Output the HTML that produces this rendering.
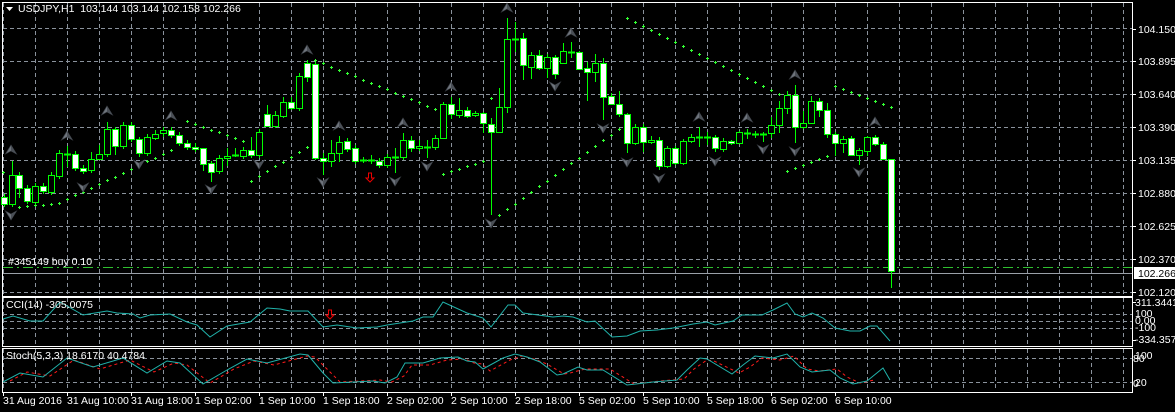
<!DOCTYPE html>
<html><head><meta charset="utf-8"><style>
html,body{margin:0;padding:0;background:#000;width:1175px;height:412px;overflow:hidden}
svg{display:block}
text{font-family:"Liberation Sans",sans-serif;font-size:10.5px;fill:#fff}
</style></head><body>
<svg id="s" width="1175" height="412" xmlns="http://www.w3.org/2000/svg"></svg>
<script>
const S=document.getElementById('s');let h='';
const G='#8a929c';
function L(x1,y1,x2,y2,c,dash,w){h+=`<line x1="${x1}" y1="${y1}" x2="${x2}" y2="${y2}" stroke="${c}" stroke-width="${w||1}" ${dash?`stroke-dasharray="${dash}"`:''} shape-rendering="crispEdges"/>`;}
function T(x,y,t,a){h+=`<text x="${x}" y="${y}" ${a||''}>${t}</text>`;}
const panels=[[3,295],[298,345],[349,391]];
for(let x=3;x<1130;x+=32){
 const day=((x-179)%192===0)&&x>=179;
 panels.forEach(p=>L(x+.5,p[0],x+.5,p[1],day?'#fff':G,'4,3'));
}
[28,61,94,127,160,193,226,259,292].forEach(y=>L(3,y+.5,1132,y+.5,G,'4,3'));
[314,321,328].forEach(y=>L(3,y+.5,1132,y+.5,G,'4,3'));
[358,382].forEach(y=>L(3,y+.5,1132,y+.5,G,'4,3'));
function R(x,y,w,hh){h+=`<rect x="${x+.5}" y="${y+.5}" width="${w}" height="${hh}" fill="none" stroke="#fff" shape-rendering="crispEdges"/>`;}
R(2,2,1130,294);R(2,297,1130,49);R(2,348,1130,44);
L(3,267.5,1132,267.5,'#2fbf2f','10,4,2,4');
L(3,273.5,1132,273.5,'#9aa0a8');
T(8,265,'#345149 buy 0.10');
const sar=[[3,172,3,172],[19,207,59,203],[59,203,171,150],[187,121,243,141],[251,181,307,147],[315,60,435,109],[443,174,483,161],[491,98,491,98],[499,215,619,129],[627,18,779,94],[787,171,827,156],[835,86,891,107]];
sar.forEach(s=>{const n=Math.round((s[2]-s[0])/8);for(let i=0;i<=n;i++){const x=s[0]+i*8,y=Math.round(n?s[1]+(s[3]-s[1])*i/n:s[1]);h+=`<path d="M${x-1} ${y+.5}h3M${x+.5} ${y-1}v3" stroke="#33ff33" stroke-width="1" shape-rendering="crispEdges"/>`;}});
const C=[[4,197,204,1],[12,175,204,0,161,207],[19,175,188,1,172,198],[27,188,201,1],[35,186,202,0],[43,186,191,1],[51,175,192,0],[59,153,176,0,150],[67,154,154,0,146,167],[75,154,168,1],[83,168,171,1],[91,159,170,0,152,173],[99,154,159,0,145,160],[107,129,154,0,122,157],[115,129,146,1,127,155],[123,125,146,0],[131,125,139,1],[139,139,153,1,137,157],[147,137,153,0],[155,134,138,0,130,140],[163,130,133,0,127,137],[171,130,135,1],[179,135,143,1],[187,143,147,1],[195,147,149,1,143,152],[203,148,164,1,148,171],[211,163,172,1,161,182],[219,158,171,0],[227,156,158,0,148,166],[235,155,155,0,148,157],[243,150,156,0],[251,150,155,1,137,158],[259,132,155,0],[267,114,126,1,105,127],[275,115,126,0,111,128],[283,102,116,0,97,118],[291,102,108,1,97,110],[299,76,108,0],[307,63,77,1,60,82],[315,64,158,1,62,160],[323,158,161,1,153,175],[331,153,161,0,140,167],[339,142,153,0,136,162],[347,141,149,1],[355,148,161,1],[363,160,160,0,157,163],[371,160,160,0,155,164],[379,161,165,1],[387,157,165,0],[395,157,157,0,148,173],[403,140,157,0,133,160],[411,140,148,1,136,152],[419,146,148,0,140,151],[427,147,147,0,140,158],[435,138,147,0],[443,104,138,0,102,139],[451,104,114,1,97,119],[459,110,115,0,98,118],[467,110,116,1,107,118],[475,113,115,0,111,117],[483,113,123,1,112,133],[491,124,132,1,118,215],[499,107,132,0,88,133],[507,39,107,0,18,113],[515,39,39,0,22,52],[523,38,65,1,33,80],[531,55,67,0,52,79],[539,55,68,1,50,70],[547,57,68,0,54,78],[555,57,74,1,55,79],[563,51,63,0,43,64],[571,52,52,0,42,58],[579,52,69,1,51,70],[587,68,72,1,62,101],[595,63,72,0,54,82],[603,63,97,1,58,120],[611,96,104,1,93,105],[619,104,114,1,91,117],[627,114,143,1,113,153],[635,127,143,0,124,145],[643,127,142,1,124,152],[651,140,142,0,136,144],[659,140,166,1,137,170],[667,148,166,0,146,168],[675,148,163,1,146,165],[683,141,163,0,139,165],[691,137,141,0,134,143],[699,137,137,0,127,147],[707,137,137,0,132,145],[715,137,148,1,135,152],[723,141,149,0,138,152],[731,141,143,1,140,145],[739,132,143,0,131,144],[747,133,133,0,129,139],[755,134,134,0,131,138],[763,134,134,0,132,142],[771,125,133,0,117,138],[779,108,125,0,101,133],[787,95,108,0,91,114],[795,95,127,1,85,143],[803,123,127,0,111,129],[811,101,123,0,96,124],[819,101,110,1,98,117],[827,110,134,1,103,138],[835,134,143,1,132,156],[843,139,143,0,136,153],[851,138,155,1,136,156],[859,150,155,0,148,165],[867,137,151,0,136,156],[875,137,144,1,135,146],[883,144,159,1,142,160],[891,159,271,1,159,288]];
C.forEach(c=>{const [x,bt,bb,f]=c;const wt=c[4]!==undefined?c[4]:bt-3,wb=c[5]!==undefined?c[5]:bb+3;
 L(x+.5,wt,x+.5,wb,'#00ff00');
 if(bb-bt<1){L(x-3,bt+.5,x+4,bt+.5,'#00ff00',0,2);}
 else h+=`<rect x="${x-2.5}" y="${bt+.5}" width="6" height="${bb-bt}" fill="${f?'#fff':'#000'}" stroke="#00ff00" shape-rendering="crispEdges"/>`;
});
const up=[[11,150],[67,136],[107,111],[171,116],[307,50],[339,126],[403,123],[451,87],[507,8],[571,33],[699,117],[747,118],[795,75],[875,122]];
const dn=[[11,215],[83,187],[139,164],[211,189],[259,164],[323,182],[395,181],[427,166],[491,223],[555,86],[603,128],[627,162],[659,178],[715,161],[763,149],[795,151],[859,172]];
up.forEach(([x,y])=>h+=`<path d="M${x} ${y-5}L${x+5.5} ${y+4}L${x} ${y+1}L${x-5.5} ${y+4}Z" fill="#6e747c" stroke="#3a3e44" stroke-width=".7"/><path d="M${x} ${y-5}L${x+5.5} ${y+4}L${x} ${y+1}Z" fill="#4a4f56"/>`);
dn.forEach(([x,y])=>h+=`<path d="M${x} ${y+5}L${x+5.5} ${y-4}L${x} ${y-1}L${x-5.5} ${y-4}Z" fill="#6e747c" stroke="#3a3e44" stroke-width=".7"/><path d="M${x} ${y+5}L${x+5.5} ${y-4}L${x} ${y-1}Z" fill="#4a4f56"/>`);
function redArrow(x,y){h+=`<path d="M${x-1.5} ${y-5}h3v5h2.5l-4 4l-4-4h2.5z" fill="none" stroke="#e00" stroke-width="1"/>`;}
redArrow(370,178);redArrow(330,315);
function P(pts,c,dash){h+=`<polyline points="${pts.map(p=>p.join(',')).join(' ')}" fill="none" stroke="${c}" stroke-width="1" ${dash?`stroke-dasharray="${dash}"`:''}/>`;}
const cci=[[3,319],[13,316],[30,321],[43,321],[60,302],[83,315],[107,311],[117,313],[133,314],[140,318],[150,315],[170,314],[187,322],[197,325],[210,337],[227,326],[250,322],[267,308],[280,309],[290,311],[308,311],[323,327],[337,325],[357,328],[377,327],[387,325],[413,321],[423,317],[433,317],[443,302],[467,313],[483,318],[491,327],[508,305],[515,305],[523,313],[553,317],[563,316],[573,317],[587,322],[595,321],[612,337],[627,336],[640,331],[657,330],[673,328],[693,324],[707,322],[715,325],[733,321],[742,315],[762,315],[773,310],[787,303],[795,314],[803,317],[812,313],[823,318],[835,328],[850,331],[860,331],[870,326],[877,326],[890,341]];
P(cci,'#20b2aa');
const st=[[3,382],[20,373],[43,377],[67,358],[93,367],[123,358],[147,373],[167,361],[180,363],[203,384],[227,370],[247,359],[267,363],[300,354],[308,355],[323,373],[333,383],[373,381],[385,383],[397,377],[405,363],[423,363],[440,358],[458,357],[467,361],[475,362],[483,369],[503,358],[515,354],[527,357],[540,362],[557,375],[563,374],[578,367],[587,370],[603,370],[627,385],[653,382],[677,380],[687,370],[700,358],[707,359],[732,374],[743,365],[755,356],[773,358],[787,354],[800,367],[812,372],[830,370],[840,378],[853,384],[867,381],[883,368],[890,380]];
P(st.map(p=>[p[0]+7,p[1]+(p[1]<370?2:-1)]).filter(p=>p[0]<=888),'#ff1a1a','3,3');
P(st,'#20b2aa');
h+=`<path d="M6 7h7l-3.5 4z" fill="#fff"/>`;
T(18,12,'USDJPY,H1&#160; 103.144 103.144 102.158 102.266');
T(6,308,'CCI(14) -305.0075');
T(6,359,'Stoch(5,3,3) 18.6170 40.4784');
const pl=[[29,'104.150'],[61,'103.895'],[94,'103.640'],[127,'103.390'],[160,'103.135'],[193,'102.880'],[226,'102.625'],[259,'102.370'],[292,'102.120']];
pl.forEach(([y,t])=>{L(1133,y+.5,1136,y+.5,'#fff');T(1138,y+4,t);});
h+=`<rect x="1134" y="267" width="41" height="12" fill="#fff"/>`;
T(1138,277,'102.266','style="fill:#000"');
T(1135,306,'311.3441');T(1135,317,'100');T(1135,324,'0.00');T(1135,331,'-100');T(1135,343,'-334.3576');
L(1133,302.5,1136,302.5,'#fff');L(1133,340.5,1136,340.5,'#fff');
T(1135,359,'100');T(1133,362,'80');T(1135,386,'20');T(1133,387,'0');
const tl=['31 Aug 2016','31 Aug 10:00','31 Aug 18:00','1 Sep 02:00','1 Sep 10:00','1 Sep 18:00','2 Sep 02:00','2 Sep 10:00','2 Sep 18:00','5 Sep 02:00','5 Sep 10:00','5 Sep 18:00','6 Sep 02:00','6 Sep 10:00'];
tl.forEach((t,i)=>{const x=3+64*i;L(x+.5,392,x+.5,396,'#fff');T(x,404,t);});
S.innerHTML=h;
</script>
</body></html>
